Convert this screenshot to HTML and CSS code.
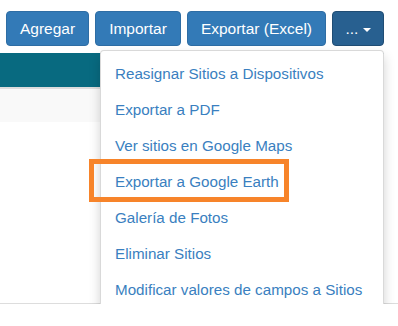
FILE: index.html
```html
<!DOCTYPE html>
<html lang="es">
<head>
    <meta charset="UTF-8">
    <meta name="viewport" content="width=device-width, initial-scale=1.0">
    <title>Sitios</title>
    <link rel="stylesheet" href="styles.css">
</head>
<body>

<div class="toolbar">
    <button class="btn">Agregar</button>
    <button class="btn">Importar</button>
    <button class="btn">Exportar (Excel)</button>
    <div class="btn-group">
        <button class="btn btn-more">... <span class="caret"></span></button>
        <ul class="dropdown-menu">
            <li><a href="#">Reasignar Sitios a Dispositivos</a></li>
            <li><a href="#">Exportar a PDF</a></li>
            <li><a href="#">Ver sitios en Google Maps</a></li>
            <li class="marked"><a href="#">Exportar a Google Earth</a><span class="highlight"></span></li>
            <li><a href="#">Galería de Fotos</a></li>
            <li><a href="#">Eliminar Sitios</a></li>
            <li><a href="#">Modificar valores de campos a Sitios</a></li>
        </ul>
    </div>
</div>

<div class="panel">
    <div class="panel-heading"></div>
    <div class="panel-filter"></div>
    <div class="panel-body"></div>
</div>
<div class="footer-line"></div>

</body>
</html>
```

FILE: styles.css
```css
body {
    margin: 0;
    font-family: "Liberation Sans", Arial, sans-serif;
    background: #fff;
}

.toolbar {
    display: flex;
    gap: 6px;
    padding: 11px 0 0 6px;
}

.btn {
    height: 35px;
    padding: 0 13px;
    font-family: inherit;
    font-size: 15.5px;
    line-height: 33px;
    color: #fff;
    background-color: #337ab7;
    border: 1px solid #2e6da4;
    border-radius: 4px;
    cursor: pointer;
}

.btn-more {
    width: 52px;
    padding: 0;
    background-color: #286090;
    border-color: #204d74;
}

.caret {
    display: inline-block;
    width: 0;
    height: 0;
    vertical-align: middle;
    border-top: 4px solid #fff;
    border-left: 4px solid transparent;
    border-right: 4px solid transparent;
}

.btn-group {
    position: relative;
}

.dropdown-menu {
    position: absolute;
    top: 39px;
    right: 0;
    z-index: 10;
    box-sizing: border-box;
    width: 284px;
    margin: 0;
    padding: 5px 0 4px;
    list-style: none;
    background: #fff;
    border: 1px solid rgba(0, 0, 0, 0.15);
    border-radius: 4px;
    box-shadow: 0 6px 12px rgba(0, 0, 0, 0.175);
}

.dropdown-menu li {
    position: relative;
}

.dropdown-menu a {
    display: block;
    padding: 0 14px;
    height: 36px;
    line-height: 36px;
    font-size: 15.2px;
    color: #3a7fc0;
    text-decoration: none;
    white-space: nowrap;
}

.highlight {
    position: absolute;
    top: -5px;
    left: -12px;
    box-sizing: border-box;
    width: 200px;
    height: 43px;
    border: 5px solid #f7842a;
}

.panel {
    margin: 7px 14px 0 0;
}

.panel-heading {
    height: 34px;
    background: #086a80;
    border-bottom: 2px solid #ddd;
}

.panel-filter {
    height: 33px;
    background: #f9f9f9;
}

.panel-body {
    height: 181px;
}

.footer-line {
    border-top: 1px solid #ddd;
}
```
